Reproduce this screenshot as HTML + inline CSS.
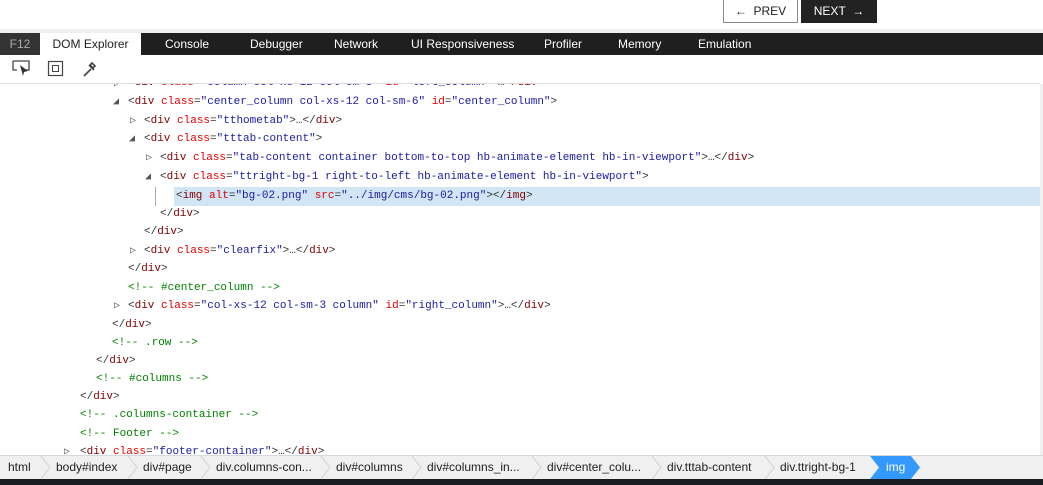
<!DOCTYPE html>
<html><head><style>
body{margin:0;width:1043px;height:485px;overflow:hidden;background:#fff;position:relative;font-family:"Liberation Sans",sans-serif}
.a{position:absolute}
.tabs{top:33px;left:0;width:1043px;height:22px;background:#1f1f1f}
.tab{position:absolute;top:0;height:22px;line-height:22px;font-size:12px;color:#fff}
.code{font-family:"Liberation Mono",monospace;font-size:11px;white-space:pre}
.l{position:absolute;height:18px;line-height:18px}
.p{color:#333}.t{color:#800000}.at{color:#e00000}.v{color:#1a1aa6}.c{color:#008000}
.ar{position:absolute;font-size:10px;color:#555}
.bc{position:absolute;top:455px;left:0;width:1043px;height:23px;background:#f0f0f0;border-top:1px solid #d8d8e0}
.bi{position:absolute;top:0;height:23px;line-height:23px;font-size:12px;color:#222}
</style></head><body>
<div class="a" style="left:723px;top:-1px;width:73px;height:22px;border:1px solid #888;font-size:12px;line-height:22px;text-align:center;color:#222">&#8592;&nbsp; PREV</div>
<div class="a" style="left:801px;top:0;width:76px;height:23px;background:#222;color:#fff;font-size:12px;line-height:22px;text-align:center">NEXT &nbsp;&#8594;</div>
<div class="a" style="top:29px;left:0;width:1043px;height:4px;background:#efefef"></div>
<div class="a tabs">
<div class="tab" style="left:0;width:40px;background:#333;color:#aaa;text-align:center">F12</div>
<div class="tab" style="left:40px;width:101px;background:#fff;color:#222;text-align:center">DOM Explorer</div>
<div class="tab" style="left:165px">Console</div>
<div class="tab" style="left:250px">Debugger</div>
<div class="tab" style="left:334px">Network</div>
<div class="tab" style="left:411px">UI Responsiveness</div>
<div class="tab" style="left:544px">Profiler</div>
<div class="tab" style="left:618px">Memory</div>
<div class="tab" style="left:698px">Emulation</div>
</div>
<svg class="a" style="left:12px;top:60px" width="90" height="18">
<path d="M1 1h16v9h-4M5 10H1V1" fill="none" stroke="#444" stroke-width="1.3"/><path d="M8 5l8 6-4 1-1 4z" fill="#333"/>
<rect x="36.5" y="1.5" width="14" height="14" fill="none" stroke="#444" stroke-width="1.2"/><rect x="40.5" y="5.5" width="6" height="6" fill="none" stroke="#444"/>
<path d="M72 16l7-7M77 5l5 5M80 3l3 3-2 2-3-3z" stroke="#444" stroke-width="1.6" fill="none"/>
</svg>
<div class="a" style="top:83px;left:0;width:1040px;height:1px;background:#ddd"></div>
<div class="a" style="top:84px;left:1040px;width:3px;height:371px;background:#f0f0f0"></div>
<div class="a code" style="top:84px;left:0;width:1040px;height:371px;overflow:hidden">
<div class="a" style="top:-84px;left:0;width:1040px;height:455px">
<div class="a" style="top:187px;left:174px;width:866px;height:19px;background:#d1e5f4"></div>
<div class="a" style="top:187px;left:155px;width:1px;height:19px;background:#aaa"></div>
<div class="l" style="top:74px;left:128px"><span class="p">&lt;</span><span class="t">div</span> <span class="at">class</span><span class="p">=</span><span class="v">"column col-xs-12 col-sm-3"</span> <span class="at">id</span><span class="p">=</span><span class="v">"left_column"</span><span class="p">&gt;…&lt;/</span><span class="t">div</span><span class="p">&gt;</span></div>
<div class="ar" style="top:78px;left:114px">&#9655;</div>
<div class="ar" style="top:96px;left:113px">&#9698;</div>
<div class="l" style="top:93px;left:128px"><span class="p">&lt;</span><span class="t">div</span> <span class="at">class</span><span class="p">=</span><span class="v">"center_column col-xs-12 col-sm-6"</span> <span class="at">id</span><span class="p">=</span><span class="v">"center_column"</span><span class="p">&gt;</span></div>
<div class="ar" style="top:115px;left:130px">&#9655;</div>
<div class="l" style="top:112px;left:144px"><span class="p">&lt;</span><span class="t">div</span> <span class="at">class</span><span class="p">=</span><span class="v">"tthometab"</span><span class="p">&gt;…&lt;/</span><span class="t">div</span><span class="p">&gt;</span></div>
<div class="ar" style="top:133px;left:129px">&#9698;</div>
<div class="l" style="top:130px;left:144px"><span class="p">&lt;</span><span class="t">div</span> <span class="at">class</span><span class="p">=</span><span class="v">"tttab-content"</span><span class="p">&gt;</span></div>
<div class="ar" style="top:152px;left:146px">&#9655;</div>
<div class="l" style="top:149px;left:160px"><span class="p">&lt;</span><span class="t">div</span> <span class="at">class</span><span class="p">=</span><span class="v">"tab-content container bottom-to-top hb-animate-element hb-in-viewport"</span><span class="p">&gt;…&lt;/</span><span class="t">div</span><span class="p">&gt;</span></div>
<div class="ar" style="top:171px;left:145px">&#9698;</div>
<div class="l" style="top:168px;left:160px"><span class="p">&lt;</span><span class="t">div</span> <span class="at">class</span><span class="p">=</span><span class="v">"ttright-bg-1 right-to-left hb-animate-element hb-in-viewport"</span><span class="p">&gt;</span></div>
<div class="l" style="top:187px;left:176px"><span class="p">&lt;</span><span class="t">img</span> <span class="at">alt</span><span class="p">=</span><span class="v">"bg-02.png"</span> <span class="at">src</span><span class="p">=</span><span class="v">"../img/cms/bg-02.png"</span><span class="p">&gt;&lt;/</span><span class="t">img</span><span class="p">&gt;</span></div>
<div class="l" style="top:205px;left:160px"><span class="p">&lt;/</span><span class="t">div</span><span class="p">&gt;</span></div>
<div class="l" style="top:223px;left:144px"><span class="p">&lt;/</span><span class="t">div</span><span class="p">&gt;</span></div>
<div class="ar" style="top:245px;left:130px">&#9655;</div>
<div class="l" style="top:242px;left:144px"><span class="p">&lt;</span><span class="t">div</span> <span class="at">class</span><span class="p">=</span><span class="v">"clearfix"</span><span class="p">&gt;…&lt;/</span><span class="t">div</span><span class="p">&gt;</span></div>
<div class="l" style="top:260px;left:128px"><span class="p">&lt;/</span><span class="t">div</span><span class="p">&gt;</span></div>
<div class="l c" style="top:279px;left:128px">&lt;!-- #center_column --&gt;</div>
<div class="ar" style="top:300px;left:114px">&#9655;</div>
<div class="l" style="top:297px;left:128px"><span class="p">&lt;</span><span class="t">div</span> <span class="at">class</span><span class="p">=</span><span class="v">"col-xs-12 col-sm-3 column"</span> <span class="at">id</span><span class="p">=</span><span class="v">"right_column"</span><span class="p">&gt;…&lt;/</span><span class="t">div</span><span class="p">&gt;</span></div>
<div class="l" style="top:316px;left:112px"><span class="p">&lt;/</span><span class="t">div</span><span class="p">&gt;</span></div>
<div class="l c" style="top:334px;left:112px">&lt;!-- .row --&gt;</div>
<div class="l" style="top:352px;left:96px"><span class="p">&lt;/</span><span class="t">div</span><span class="p">&gt;</span></div>
<div class="l c" style="top:370px;left:96px">&lt;!-- #columns --&gt;</div>
<div class="l" style="top:388px;left:80px"><span class="p">&lt;/</span><span class="t">div</span><span class="p">&gt;</span></div>
<div class="l c" style="top:406px;left:80px">&lt;!-- .columns-container --&gt;</div>
<div class="l c" style="top:425px;left:80px">&lt;!-- Footer --&gt;</div>
<div class="ar" style="top:446px;left:64px">&#9655;</div>
<div class="l" style="top:443px;left:80px"><span class="p">&lt;</span><span class="t">div</span> <span class="at">class</span><span class="p">=</span><span class="v">"footer-container"</span><span class="p">&gt;…&lt;/</span><span class="t">div</span><span class="p">&gt;</span></div>
</div>
</div>
<div class="bc">
<div class="bi" style="left:8px">html</div>
<div class="bi" style="left:56px">body#index</div>
<div class="bi" style="left:143px">div#page</div>
<div class="bi" style="left:216px">div.columns-con...</div>
<div class="bi" style="left:336px">div#columns</div>
<div class="bi" style="left:427px">div#columns_in...</div>
<div class="bi" style="left:547px">div#center_colu...</div>
<div class="bi" style="left:667px">div.tttab-content</div>
<div class="bi" style="left:780px">div.ttright-bg-1</div>
<svg class="a" style="left:0;top:0" width="1043" height="23"><g fill="none" stroke="#d0d0d8">
<path d="M41 0l9 11.5-9 11.5M128 0l9 11.5-9 11.5M201 0l9 11.5-9 11.5M321 0l9 11.5-9 11.5M412 0l9 11.5-9 11.5M532 0l9 11.5-9 11.5M652 0l9 11.5-9 11.5M765 0l9 11.5-9 11.5"/></g>
<path d="M870 0h41l9 11.5-9 11.5h-41l9-11.5z" fill="#3399ff"/></svg>
<div class="bi" style="left:886px;color:#fff">img</div>
</div>
<div class="a" style="top:479px;left:0;width:1043px;height:6px;background:#1a1e24"></div>
</body></html>
